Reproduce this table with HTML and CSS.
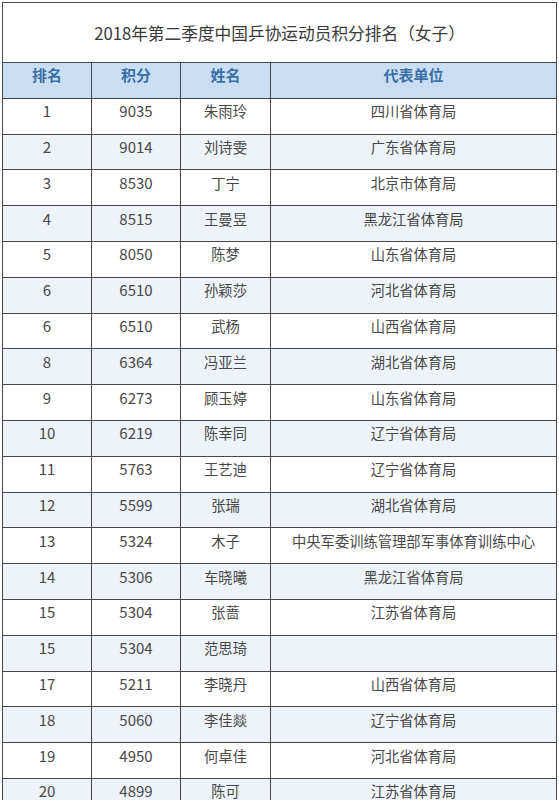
FILE: index.html
```html
<!DOCTYPE html>
<html lang="zh">
<head>
<meta charset="utf-8">
<link rel="stylesheet" href="styles.css">
</head>
<body>
<table class="rank">
  <colgroup>
    <col class="c1"><col class="c2"><col class="c3"><col class="c4">
  </colgroup>
  <tr class="title-row"><td colspan="4" class="title">2018年第二季度中国乒协运动员积分排名（女子）</td></tr>
  <tr class="head"><th>排名</th><th>积分</th><th>姓名</th><th>代表单位</th></tr>
  <tr><td class="num">1</td><td class="num">9035</td><td>朱雨玲</td><td>四川省体育局</td></tr>
  <tr><td class="num">2</td><td class="num">9014</td><td>刘诗雯</td><td>广东省体育局</td></tr>
  <tr><td class="num">3</td><td class="num">8530</td><td>丁宁</td><td>北京市体育局</td></tr>
  <tr><td class="num">4</td><td class="num">8515</td><td>王曼昱</td><td>黑龙江省体育局</td></tr>
  <tr><td class="num">5</td><td class="num">8050</td><td>陈梦</td><td>山东省体育局</td></tr>
  <tr><td class="num">6</td><td class="num">6510</td><td>孙颖莎</td><td>河北省体育局</td></tr>
  <tr><td class="num">6</td><td class="num">6510</td><td>武杨</td><td>山西省体育局</td></tr>
  <tr><td class="num">8</td><td class="num">6364</td><td>冯亚兰</td><td>湖北省体育局</td></tr>
  <tr><td class="num">9</td><td class="num">6273</td><td>顾玉婷</td><td>山东省体育局</td></tr>
  <tr><td class="num">10</td><td class="num">6219</td><td>陈幸同</td><td>辽宁省体育局</td></tr>
  <tr><td class="num">11</td><td class="num">5763</td><td>王艺迪</td><td>辽宁省体育局</td></tr>
  <tr><td class="num">12</td><td class="num">5599</td><td>张瑞</td><td>湖北省体育局</td></tr>
  <tr><td class="num">13</td><td class="num">5324</td><td>木子</td><td>中央军委训练管理部军事体育训练中心</td></tr>
  <tr><td class="num">14</td><td class="num">5306</td><td>车晓曦</td><td>黑龙江省体育局</td></tr>
  <tr><td class="num">15</td><td class="num">5304</td><td>张蔷</td><td>江苏省体育局</td></tr>
  <tr><td class="num">15</td><td class="num">5304</td><td>范思琦</td><td></td></tr>
  <tr><td class="num">17</td><td class="num">5211</td><td>李晓丹</td><td>山西省体育局</td></tr>
  <tr><td class="num">18</td><td class="num">5060</td><td>李佳燚</td><td>辽宁省体育局</td></tr>
  <tr><td class="num">19</td><td class="num">4950</td><td>何卓佳</td><td>河北省体育局</td></tr>
  <tr><td class="num">20</td><td class="num">4899</td><td>陈可</td><td>江苏省体育局</td></tr>
</table>
</body>
</html>
```
FILE: styles.css
```css
html, body {
  margin: 0;
  padding: 0;
  background: #ffffff;
}
body {
  padding: 2px 0 0 2px;
  font-family: "Noto Sans CJK SC", "Noto Sans", sans-serif;
  color: #484848;
  overflow: hidden;
}
.rank {
  border-collapse: collapse;
  table-layout: fixed;
  width: 554px;
}
.c1 { width: 89px; }
.c2 { width: 89px; }
.c3 { width: 90px; }
.c4 { width: 286px; }
.rank td, .rank th {
  border: 1px solid #474747;
  text-align: center;
  vertical-align: middle;
  height: 35.8px;
  box-sizing: border-box;
  padding: 0 0 10px 0;
  font-size: 14.3px;
  line-height: 20px;
  font-weight: 400;
}
.rank td.num {
  font-size: 15px;
}
.rank tr:nth-child(odd) td { background: #ffffff; }
.rank tr:nth-child(even) td { background: #eef3fa; }
.rank .title-row td.title {
  background: #ffffff;
  height: 60px;
  padding: 0;
  font-size: 16.7px;
  color: #3a3a3a;
}
.rank .head th {
  background: #c9def3;
  color: #3b6ea6;
  font-weight: 700;
  font-size: 15px;
}
```
